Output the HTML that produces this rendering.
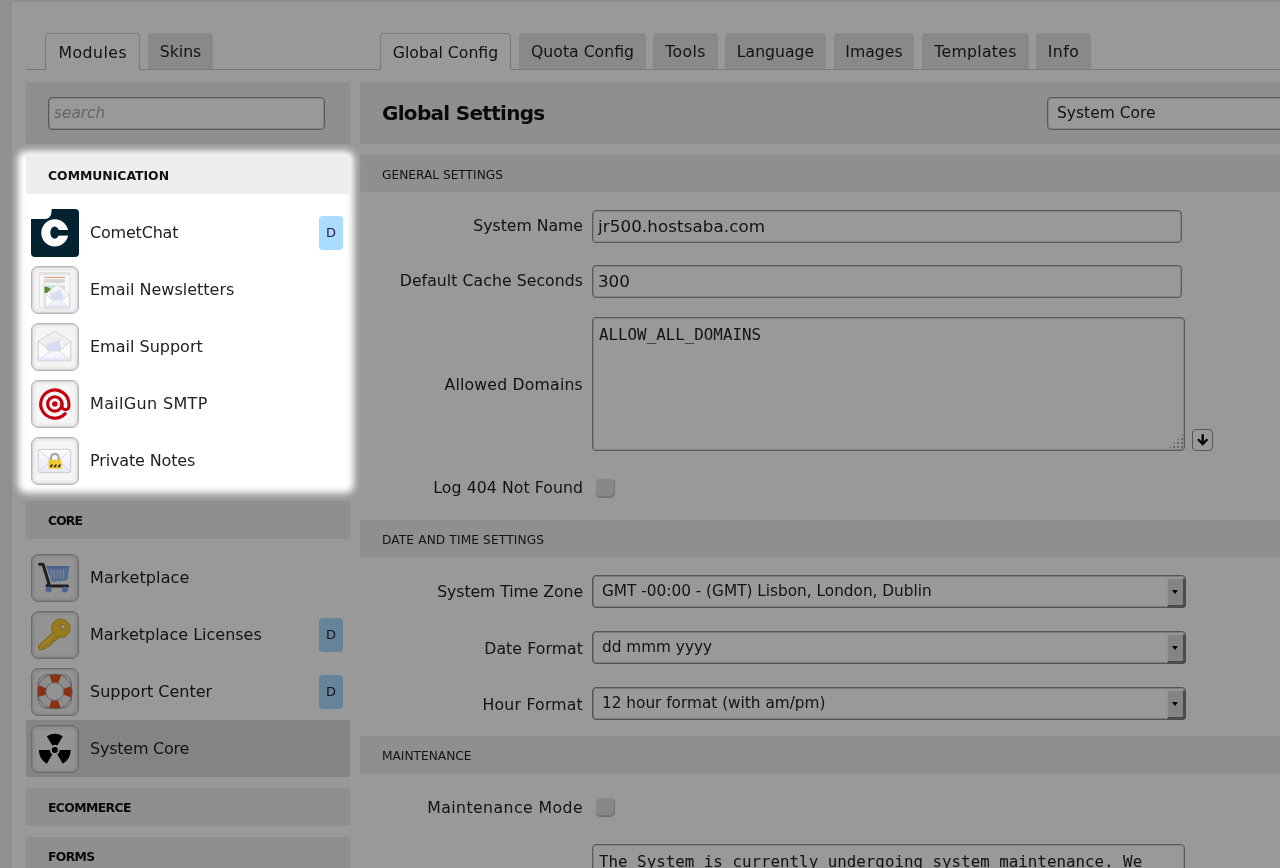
<!DOCTYPE html>
<html>
<head>
<meta charset="utf-8">
<title>Global Settings</title>
<style>
*{box-sizing:border-box}
html,body{margin:0;padding:0}
body>div{will-change:transform}
body{width:1280px;height:868px;overflow:hidden;background:#f0f0f0;font-family:"DejaVu Sans","Liberation Sans",sans-serif;font-size:16px;color:#222;position:relative}
#wrap{position:absolute;left:12px;top:2px;width:1268px;height:866px;background:#fff}
.abs{position:absolute}
.tabline{left:26px;top:69px;width:1254px;height:1px;background:#ccc}
.tab{position:absolute;top:33px;height:36px;background:#e4e4e4;border-radius:4px 4px 0 0;font-size:15.7px;line-height:37px;text-align:center;color:#222;white-space:nowrap}
.tab.on{top:33px;height:37px;background:#fff;border:1px solid #ccc;border-bottom:none;line-height:38px}
.panel{position:absolute;background:#eee}
.hdr{position:absolute;left:26px;width:324px;height:38px;background:#eee;font-weight:bold;font-size:12.4px;line-height:40px;padding-left:22px;color:#111;letter-spacing:0}
.row{position:absolute;left:26px;width:324px;height:57px}
.row .ic{position:absolute;left:5px;top:5px;width:48px;height:48px;border:1px solid #b6b6b6;border-radius:7px;background:#f5f5f5;box-shadow:inset 0 0 0 1px #d2d2d2,inset 0 0 0 3.5px #ebebeb}
.row .ic svg,.row .nf svg{position:absolute;left:-1px;top:-1px;width:48px;height:48px}
.row .nf{position:absolute;left:5px;top:5px;width:48px;height:48px}
.row .nf svg{left:0;top:0}
.row .tx{position:absolute;left:64px;top:0;line-height:57px;font-size:16px;white-space:nowrap;color:#222}
.row .d{position:absolute;left:293px;top:12px;width:24px;height:34px;border-radius:4px;background:#aadcff;font-size:13px;line-height:34px;text-align:center;color:#223}
.row.sel{background:#dcdcdc}
.shdr{position:absolute;left:360px;width:920px;height:37px;background:#eee;font-size:12.2px;line-height:40px;padding-left:22px;color:#222}
.lbl{position:absolute;left:360px;width:223px;text-align:right;font-size:15.7px;white-space:nowrap;color:#222}
.inp{position:absolute;left:592px;width:590px;height:33px;border:1px solid #969696;box-shadow:inset 0 0 0 1px #dcdcdc;border-radius:4px;background:#fff;font-size:16.7px;line-height:31px;padding-left:5px;color:#222;white-space:nowrap;overflow:hidden}
.ta{position:absolute;left:592px;width:593px;border:1px solid #969696;box-shadow:inset 0 0 0 1px #dcdcdc;border-radius:4px;background:#fff;font-family:"DejaVu Sans Mono","Liberation Mono",monospace;font-size:15.83px;padding:7px 0 0 6px;white-space:nowrap;overflow:hidden;color:#222}
.sel2{position:absolute;left:592px;width:594px;height:33px;border:1px solid #8c8c8c;box-shadow:inset 0 0 0 1px #cfcfcf;border-radius:4px;background:#fff;font-size:15.3px;line-height:31px;padding-left:9px;color:#222;white-space:nowrap}
.sel2 i{position:absolute;right:-1px;top:1px;width:20px;height:31px;background:#dcdcdc;border-style:solid;border-width:2px 3px 3px 2px;border-color:#fbfbfb #7d7d7d #7d7d7d #fbfbfb;border-radius:0 4px 4px 0}
.sel2 i:after{content:"";position:absolute;left:3.5px;top:11px;border:3.7px solid transparent;border-top:4.2px solid #000;border-bottom:none}
.cb{position:absolute;left:595px;width:20px;height:19px;border-radius:5px;background:#e3e3e1;box-shadow:inset 1px 1px 0 #fafafa,inset -1px -1px 0 #c4c4c4,0 1px 0 #bdbdbd}
#ov{position:absolute;left:0;top:0;width:1280px;height:868px;background:rgba(0,0,0,.4)}
#hl{position:absolute;left:18.3px;top:151.2px;width:336px;height:342.3px;background:#fff;border-radius:8px;filter:blur(3.8px)}
#hl2{position:absolute;left:26px;top:159px;width:320px;height:327px;background:#fff}
</style>
</head>
<body>
<div id="wrap"></div>
<div class="abs tabline"></div>
<!-- left tabs -->
<div class="tab on" style="left:45px;width:95px;letter-spacing:.5px;text-indent:.5px">Modules</div>
<div class="tab" style="left:148px;width:65px">Skins</div>
<!-- right tabs -->
<div class="tab on" style="left:380px;width:131px">Global Config</div>
<div class="tab" style="left:519px;width:127px">Quota Config</div>
<div class="tab" style="left:653px;width:65px;letter-spacing:.4px">Tools</div>
<div class="tab" style="left:725px;width:101px">Language</div>
<div class="tab" style="left:834px;width:80px">Images</div>
<div class="tab" style="left:922px;width:107px;letter-spacing:.3px">Templates</div>
<div class="tab" style="left:1036px;width:55px;letter-spacing:.5px">Info</div>

<!-- search panel -->
<div class="panel" style="left:26px;top:82px;width:324px;height:62px"></div>
<div class="abs" style="left:48px;top:97px;width:277px;height:33px;border:1px solid #969696;box-shadow:inset 0 0 0 1px #dcdcdc;border-radius:4px;background:#fff;font-style:italic;font-size:15.3px;line-height:30px;padding-left:5px;color:#aaa">search</div>

<!-- right title panel -->
<div class="panel" style="left:360px;top:82px;width:920px;height:62px"></div>
<div class="abs" style="left:382px;top:82px;line-height:62px;font-weight:bold;font-size:20px;letter-spacing:-.7px;color:#111;white-space:nowrap">Global Settings</div>
<div class="abs" style="left:1047px;top:97px;width:240px;height:33px;border:1px solid #969696;box-shadow:inset 0 0 0 1px #dcdcdc;border-radius:4px;background:#fff;font-size:15.5px;line-height:31px;padding-left:9px;color:#222">System Core</div>

<!-- left list (dim part) -->
<div class="hdr" style="top:501px;letter-spacing:-.9px">CORE</div>
<div class="row" style="top:549px"><div class="ic"><svg viewBox="0 0 48 48"><path d="M15.3 12.1h21.8q1.2 0 1.1 1.2l-1.7 12.2q-.2 1-1.2 1.1L20.6 28z" fill="#8db3f4"/><path d="M15.3 12.1h21.8q1.2 0 1.1 1.2l-.2 1.200H16z" fill="#7ea4ea"/><g stroke="#dfe8fa" stroke-width="1"><path d="M20.3 15.5v9M23.3 15.5v9M26.3 15.5v9M29.3 15.500v9M32.300 15.500v9"/></g><path d="M8.500 10.200h3.500l6 19.500-2 2.200h20.500" fill="none" stroke="#353535" stroke-width="3" stroke-linecap="round" stroke-linejoin="round"/><circle cx="17.600" cy="35.400" r="3" fill="#7fa6ee"/><circle cx="33.900" cy="35.400" r="3" fill="#7fa6ee"/></svg></div><div class="tx" style="letter-spacing:0.13px">Marketplace</div></div>
<div class="row" style="top:606px"><div class="ic"><svg viewBox="0 0 48 48"><g fill="#fbcd35" stroke="#d6a51c" stroke-width=".9"><path d="M21.8 21.6l5.600 5.200-2.800 2.800-1.500-.5-.4 2.500-1.700-.4-.4 2.400-1.800-.3-.5 2.400-1.600-.4-3.200 2.900-5.300.6-.9-4z"/><circle cx="29.700" cy="17.300" r="9.300"/></g><circle cx="32" cy="15.800" r="2.400" fill="#f4f4f4" stroke="#c99a18" stroke-width=".8"/><path d="M10.500 35.200l13-12" stroke="#ffe680" stroke-width="1.100" fill="none"/></svg></div><div class="tx">Marketplace Licenses</div><div class="d">D</div></div>
<div class="row" style="top:663px"><div class="ic"><svg viewBox="0 0 48 48"><rect x="7" y="6.700" width="33.500" height="33.500" rx="9" fill="none" stroke="#9a9a9a" stroke-width=".9"/><circle cx="23.800" cy="23.500" r="13.200" fill="none" stroke="#ececec" stroke-width="8.200"/><circle cx="23.800" cy="23.500" r="13.200" fill="none" stroke="#e5521c" stroke-width="8.200" stroke-dasharray="9.200 11.535" stroke-dashoffset="4.600"/><circle cx="23.800" cy="23.500" r="17.400" fill="none" stroke="#9c9c9c" stroke-width=".9"/><circle cx="23.800" cy="23.500" r="9" fill="none" stroke="#9c9c9c" stroke-width=".9"/></svg></div><div class="tx">Support Center</div><div class="d">D</div></div>
<div class="row sel" style="top:720px"><div class="ic"><svg viewBox="0 0 48 48"><g fill="#000"><circle cx="23.800" cy="24.900" r="3"/><path id="bl" d="M21.300 20.570L15.850 11.130A15.900 15.900 0 0 1 31.750 11.130L26.300 20.570A5 5 0 0 0 21.300 20.570z"/><path d="M21.300 20.570L15.850 11.130A15.900 15.900 0 0 1 31.750 11.130L26.300 20.570A5 5 0 0 0 21.300 20.570z" transform="rotate(120 23.800 24.900)"/><path d="M21.300 20.570L15.850 11.130A15.900 15.900 0 0 1 31.750 11.130L26.300 20.570A5 5 0 0 0 21.300 20.570z" transform="rotate(240 23.800 24.900)"/></g></svg></div><div class="tx" style="letter-spacing:-0.24px">System Core</div></div>
<div class="hdr" style="top:788px;letter-spacing:-.6px">ECOMMERCE</div>
<div class="hdr" style="top:837px;letter-spacing:-.65px">FORMS</div>

<!-- right content -->
<div class="shdr" style="top:155px">GENERAL SETTINGS</div>
<div class="lbl" style="top:216px">System Name</div>
<div class="inp" style="top:210px;letter-spacing:.1px">jr500.hostsaba.com</div>
<div class="lbl" style="top:271px;letter-spacing:0.06px">Default Cache Seconds</div>
<div class="inp" style="top:265px">300</div>
<div class="lbl" style="top:375px;letter-spacing:0.2px">Allowed Domains</div>
<div class="ta" style="top:317px;height:134px">ALLOW_ALL_DOMAINS</div>
<div class="abs" style="left:1192px;top:429px;width:21px;height:22px;border:1.5px solid #8e8e8e;border-radius:4px"><svg viewBox="0 0 21 22" style="position:absolute;left:-1.5px;top:-1.5px;width:21px;height:22px"><path d="M10.7 5.3v7.5M6 10.300l4.700 4.700 4.700-4.700" fill="none" stroke="#000" stroke-width="2.300"/></svg></div>
<div class="abs" style="left:1169px;top:434px;width:14px;height:14px;background:repeating-linear-gradient(0deg,transparent 0 2px,#fff 2px 4px),repeating-linear-gradient(90deg,#adadad 0 2px,#fff 2px 4px);clip-path:polygon(100% 0,100% 100%,0 100%)"></div>
<div class="lbl" style="top:477.5px;letter-spacing:0.08px">Log 404 Not Found</div>
<div class="cb" style="top:478px"></div>
<div class="shdr" style="top:520px;letter-spacing:.12px">DATE AND TIME SETTINGS</div>
<div class="lbl" style="top:582px;letter-spacing:-0.06px">System Time Zone</div>
<div class="sel2" style="top:575px">GMT -00:00 - (GMT) Lisbon, London, Dublin<i></i></div>
<div class="lbl" style="top:638.5px;letter-spacing:0.09px">Date Format</div>
<div class="sel2" style="top:631px">dd mmm yyyy<i></i></div>
<div class="lbl" style="top:694.5px;letter-spacing:0.22px">Hour Format</div>
<div class="sel2" style="top:687px">12 hour format (with am/pm)<i></i></div>
<div class="shdr" style="top:736px;height:38px;line-height:40px">MAINTENANCE</div>
<div class="lbl" style="top:798px;letter-spacing:0.44px">Maintenance Mode</div>
<div class="cb" style="top:797px"></div>
<div class="ta" style="top:844px;height:60px">The System is currently undergoing system maintenance. We</div>

<!-- overlay + highlight -->
<div id="ov"></div>
<div id="hl"></div><div id="hl2"></div>
<div class="hdr" style="top:156px">COMMUNICATION</div>
<div class="row" style="top:204px"><div class="nf"><svg viewBox="0 0 48 48"><path d="M20.7 0H44a4 4 0 0 1 4 4v40a4 4 0 0 1-4 4H4a4 4 0 0 1-4-4V10h14q6-.4 6.5-7z" fill="#03222f"/><path fill-rule="evenodd" fill="#fff" d="M10.3 23.9a13.5 13.6 0 1 0 27 0a13.5 13.6 0 1 0-27 0zM19.3 23.6a4.400 6.100 0 1 0 8.800 0a4.400 6.100 0 1 0-8.800 0z"/><rect x="24" y="21" width="14.5" height="5.600" fill="#03222f"/></svg></div><div class="tx" style="letter-spacing:-0.2px">CometChat</div><div class="d">D</div></div>
<div class="row" style="top:261px"><div class="ic"><svg viewBox="0 0 48 48"><rect x="8.3" y="6.6" width="30.7" height="35.2" rx="1" fill="#f7f7f5" stroke="#d6d6d6" stroke-width=".8"/><rect x="8.7" y="7" width="29.9" height="2.2" fill="#e2e2e2"/><path d="M12.8 9v32.5" stroke="#e6e2d2" stroke-width=".8"/><rect x="13.5" y="10.9" width="20.4" height="1" fill="#e98f78"/><rect x="13.5" y="13.1" width="20.4" height="3.8" fill="#d6d6d6"/><rect x="27" y="19.5" width="7" height="4" fill="#dcdcdc"/><rect x="13.5" y="19.3" width="11" height="7.6" fill="#bfe4ee"/><path d="M13.5 20.5q6 .5 9 6.4h-9z" fill="#5b8a1f"/><path d="M14.2 28.5L26.6 18l11.8 10.5v13.3H14.2z" fill="#f4f4f4" stroke="#d2d2d2" stroke-width=".7"/><path d="M19 27.5l11-3.5 2.5 9-12 2z" fill="#d9def3"/><path d="M14.2 28.5l9 6.5h6.5l8.7-6.5v13.3H14.2z" fill="#fcfcfc" stroke="#cfcfcf" stroke-width=".7"/><path d="M14.2 41.8l10-8.3h4.4l9.8 8.3z" fill="#f2f2fa" stroke="#d4d4d4" stroke-width=".6"/><rect x="14.2" y="39.5" width="24.2" height="2.3" fill="#dfe2f7"/></svg></div><div class="tx">Email Newsletters</div></div>
<div class="row" style="top:318px"><div class="ic"><svg viewBox="0 0 48 48"><path d="M7.3 18L23.8 8l15.9 10v19.7H7.3z" fill="#efefef" stroke="#cdcdcd" stroke-width=".8"/><path d="M15 22l15-6 3 10-14 5z" fill="#d6dbf4"/><path d="M28 16.5l4 1.5 1.5 8-3 1z" fill="#f4f4f8"/><path d="M7.3 18l12 10.5h9L39.7 18v19.7H7.3z" fill="#fbfbfb" stroke="#c9c9c9" stroke-width=".8"/><path d="M7.3 37.7l12.5-10h8l11.9 10z" fill="#f6f6fb" stroke="#d0d0d0" stroke-width=".7"/><rect x="7.6" y="33" width="31.8" height="4.700" fill="url(#sg)"/><defs><linearGradient id="sg" x1="0" y1="0" x2="0" y2="1"><stop offset="0" stop-color="#e4e5fb" stop-opacity="0"/><stop offset="1" stop-color="#d9dbfa"/></linearGradient></defs></svg></div><div class="tx">Email Support</div></div>
<div class="row" style="top:375px"><div class="ic"><svg viewBox="0 0 48 48"><g fill="none" stroke="#c3000e" stroke-width="3.1" stroke-linecap="round"><circle cx="23.8" cy="23.9" r="7.2"/><path d="M34.2 33.6A14.1 14.1 0 1 1 37.9 23.9v2.3a3.4 3.4 0 0 1-6.9 0V23.9"/></g><circle cx="23.8" cy="23.9" r="2.700" fill="#c3000e"/></svg></div><div class="tx" style="letter-spacing:0.33px">MailGun SMTP</div></div>
<div class="row" style="top:432px"><div class="ic"><svg viewBox="0 0 48 48"><defs><linearGradient id="pe" x1="0" y1="0" x2="0" y2="1"><stop offset="0" stop-color="#fdfdfd"/><stop offset="1" stop-color="#e6e8f6"/></linearGradient></defs><rect x="7.3" y="12.4" width="32.4" height="23.2" rx="1.5" fill="url(#pe)" stroke="#c6c7d2" stroke-width=".9"/><path d="M7.8 13l15.9 14L39.2 13M7.8 35l11-10.5M39.2 35L28.5 24.5" fill="none" stroke="#cfcfd8" stroke-width=".8"/><path d="M19.9 23.5v-2.8a3.9 3.9 0 0 1 7.8 0v2.8" fill="none" stroke="#a8a8a8" stroke-width="2.3"/><rect x="17.6" y="22.8" width="12.8" height="9" rx="1" fill="#f3c733"/><rect x="17.6" y="27.4" width="12.8" height="2.9" fill="#f0d02a"/><path d="M18.5 30.3l1.6-2.9h2l-1.6 2.9zM22.5 30.3l1.6-2.9h2l-1.6 2.9zM26.5 30.3l1.6-2.9h2l-1.6 2.9z" fill="#222"/></svg></div><div class="tx" style="letter-spacing:-0.15px">Private Notes</div></div>
</body>
</html>
